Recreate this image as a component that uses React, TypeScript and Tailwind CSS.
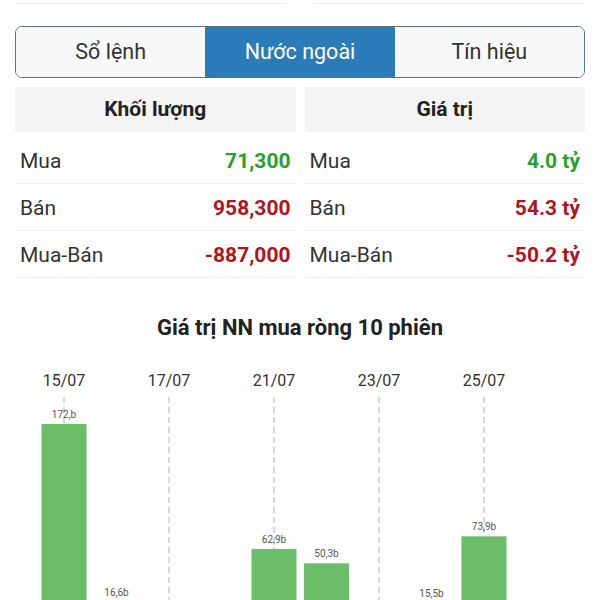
const rows = [
  { label: "Mua", vol: "71,300", val: "4.0 tỷ", color: "text-[#25a22a]" },
  { label: "Bán", vol: "958,300", val: "54.3 tỷ", color: "text-[#b3131c]" },
  { label: "Mua-Bán", vol: "-887,000", val: "-50.2 tỷ", color: "text-[#b3131c]" },
];

const dates = ["15/07", "16/07", "17/07", "18/07", "21/07", "22/07", "23/07", "24/07", "25/07", "26/07"];
const values: (number | null)[] = [172, 16.6, null, null, 62.9, 50.3, null, 15.5, 73.9, null];
const valueLabels = ["172,b", "16,6b", "", "", "62,9b", "50,3b", "", "15,5b", "73,9b", ""];

const Chart = () => {
  const base = 261;
  const scale = 1.1457;
  const step = 52.5;
  return (
    <svg width={600} height={240} className="block" style={{ fontFamily: "Roboto, sans-serif" }}>
      {dates.map((d, i) => {
        const cx = 64 + step * i;
        if (i % 2 !== 0) return null;
        return (
          <g key={d}>
            <line x1={cx} y1={37} x2={cx} y2={240} stroke="#b0b0b0" strokeWidth={1} strokeDasharray="6 4" />
            <text x={cx} y={26} textAnchor="middle" fontSize={16} fill="#333">
              {d}
            </text>
          </g>
        );
      })}
      {values.map((v, i) => {
        if (v === null) return null;
        const cx = 64 + step * i;
        const h = v * scale;
        const top = base - h;
        return (
          <g key={i}>
            <rect x={cx - 22.5} y={top} width={45} height={h} fill="#6bbd68" />
            <text x={cx} y={top - 6} textAnchor="middle" fontSize={10} fill="#555">
              {valueLabels[i]}
            </text>
          </g>
        );
      })}
    </svg>
  );
};

const Column = ({ title, field }: { title: string; field: "vol" | "val" }) => (
  <div className="flex-1">
    <div className="h-[45px] bg-[#f4f4f4] flex items-center justify-center text-[21px] font-bold text-[#222]">
      {title}
    </div>
    <div className="mt-[5px]">
      {rows.map((r) => (
        <div
          key={r.label}
          className="h-[47px] pt-[4px] flex items-center justify-between pl-[5px] pr-[5px] border-b border-[#efefef] text-[21px]"
        >
          <span className="text-[#333]">{r.label}</span>
          <span className={`font-bold ${r.color}`}>{r[field]}</span>
        </div>
      ))}
    </div>
  </div>
);

export default function App() {
  const tabs = ["Sổ lệnh", "Nước ngoài", "Tín hiệu"];
  return (
    <div className="w-[600px] h-[600px] overflow-hidden bg-white font-['Roboto',sans-serif]">
      <div className="flex px-[15px] gap-[28px]">
        <div className="flex-1 h-[4px] border-b border-[#ececec]" />
        <div className="flex-1 h-[4px] border-b border-[#ececec]" />
      </div>
      <div className="mx-[15px] mt-[22px] h-[52px] flex border border-[#5c7385] rounded-[7px] overflow-hidden">
        {tabs.map((t, i) => (
          <div
            key={t}
            className={`flex-1 flex items-center justify-center text-[21.5px] ${
              i === 1 ? "bg-[#2b7bb9] text-white" : "bg-[#f7f8f8] text-[#333]"
            }`}
          >
            {t}
          </div>
        ))}
      </div>
      <div className="flex gap-[9px] px-[15px] mt-[9px]">
        <Column title="Khối lượng" field="vol" />
        <Column title="Giá trị" field="val" />
      </div>
      <div className="mt-[33px] text-center text-[22px] font-bold text-[#222]">
        Giá trị NN mua ròng 10 phiên
      </div>
      <div className="mt-[16px]">
        <Chart />
      </div>
    </div>
  );
}
